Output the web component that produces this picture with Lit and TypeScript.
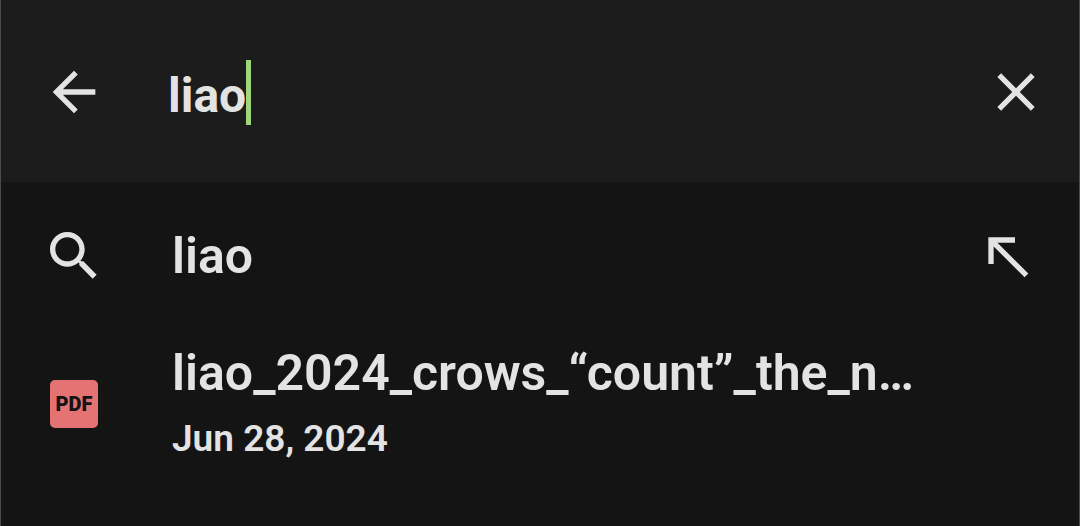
import { LitElement, html, css } from "lit";
import { customElement, property, state } from "lit/decorators.js";

const backIcon = html`<svg viewBox="0 0 24 24" aria-hidden="true"><path d="M20 11H7.83l5.59-5.59L12 4l-8 8 8 8 1.41-1.41L7.83 13H20v-2z"/></svg>`;
const closeIcon = html`<svg viewBox="0 0 24 24" aria-hidden="true"><path d="M19 6.41 17.59 5 12 10.59 6.41 5 5 6.41 10.59 12 5 17.59 6.41 19 12 13.41 17.59 19 19 17.59 13.41 12z"/></svg>`;
const searchIcon = html`<svg viewBox="0 0 24 24" aria-hidden="true"><path d="M15.5 14h-.79l-.28-.27C15.41 12.59 16 11.11 16 9.5 16 5.91 13.09 3 9.5 3S3 5.91 3 9.5 5.91 16 9.5 16c1.61 0 3.09-.59 4.23-1.57l.27.28v.79l5 4.99L20.49 19l-4.99-5zm-6 0C7.01 14 5 11.99 5 9.5S7.01 5 9.5 5 14 7.01 14 9.5 11.99 14 9.5 14z"/></svg>`;
const fillIcon = html`<svg viewBox="0 0 24 24" aria-hidden="true"><path d="M5 15h2V8.41L18.59 20 20 18.59 8.41 7H15V5H5v10z"/></svg>`;

const shared = css`
  * {
    box-sizing: border-box;
  }
  svg {
    display: block;
    width: 64px;
    height: 64px;
    fill: currentColor;
  }
  button {
    flex: none;
    padding: 0;
    border: 0;
    background: none;
    color: inherit;
    font: inherit;
    cursor: pointer;
  }
`;

@customElement("search-bar")
export class SearchBar extends LitElement {
  @property() query = "";

  static styles = [
    shared,
    css`
      :host {
        display: flex;
        align-items: center;
        box-sizing: border-box;
        min-height: 182px;
        padding: 2px 31px 0 41px;
        background: #1c1c1c;
      }
      .field {
        display: flex;
        flex: 1;
        align-items: center;
        min-width: 0;
        padding-left: 62px;
      }
      input {
        field-sizing: content;
        min-width: 0;
        padding: 8px 0 0;
        border: 0;
        outline: 0;
        background: none;
        color: inherit;
        caret-color: transparent;
        font: 700 48px/64px Roboto, sans-serif;
      }
      .caret {
        width: 5px;
        height: 65px;
        background: #9fd67a;
      }
    `,
  ];

  private onInput(event: Event) {
    const detail = (event.target as HTMLInputElement).value;
    this.dispatchEvent(new CustomEvent("query-change", { detail }));
  }

  private clear() {
    this.dispatchEvent(new CustomEvent("query-change", { detail: "" }));
  }

  render() {
    return html`
      <button type="button" aria-label="Back">${backIcon}</button>
      <div class="field">
        <input type="text" aria-label="Search" .value=${this.query} @input=${this.onInput} />
        <span class="caret"></span>
      </div>
      <button type="button" aria-label="Clear" @click=${this.clear}>${closeIcon}</button>
    `;
  }
}

@customElement("app-root")
export class AppRoot extends LitElement {
  @state() private query = "liao";

  static styles = [
    shared,
    css`
      :host {
        display: block;
        min-height: 100vh;
        box-sizing: border-box;
        border: solid #4c4c4c;
        border-width: 0 1px;
        background: #141414;
        color: #e3e3e3;
        font-family: Roboto, sans-serif;
      }
      ul {
        margin: 0;
        padding: 0;
        list-style: none;
      }
      li {
        display: flex;
        align-items: center;
        min-height: 148px;
        padding: 0 40px 0 41px;
      }
      .open {
        display: flex;
        flex: 1;
        align-items: center;
        gap: 66px;
        min-width: 0;
        text-align: left;
      }
      .icon {
        flex: none;
      }
      .text {
        display: flex;
        flex-direction: column;
        min-width: 0;
      }
      .details {
        padding-top: 6px;
      }
      .title {
        overflow: hidden;
        font-size: 50px;
        font-weight: 600;
        line-height: 64px;
        text-overflow: ellipsis;
        white-space: nowrap;
      }
      .date {
        font-size: 37px;
        font-weight: 600;
        line-height: 68px;
      }
      .badge {
        display: flex;
        align-items: center;
        justify-content: center;
        width: 48px;
        height: 48px;
        margin: 8px;
        border-radius: 5px;
        background: #e57373;
        color: #141414;
        font: 900 20px/24px Roboto, sans-serif;
      }
    `,
  ];

  render() {
    return html`
      <search-bar
        .query=${this.query}
        @query-change=${(e: CustomEvent<string>) => (this.query = e.detail)}
      ></search-bar>
      <ul>
        <li>
          <button class="open" type="button">
            <span class="icon">${searchIcon}</span>
            <span class="text"><span class="title">${this.query}</span></span>
          </button>
          <button type="button" aria-label="Use this suggestion">${fillIcon}</button>
        </li>
        <li>
          <button class="open" type="button">
            <span class="icon"><span class="badge">PDF</span></span>
            <span class="text details">
              <span class="title">liao_2024_crows_“count”_the_n…</span>
              <span class="date">Jun 28, 2024</span>
            </span>
          </button>
        </li>
      </ul>
    `;
  }
}
